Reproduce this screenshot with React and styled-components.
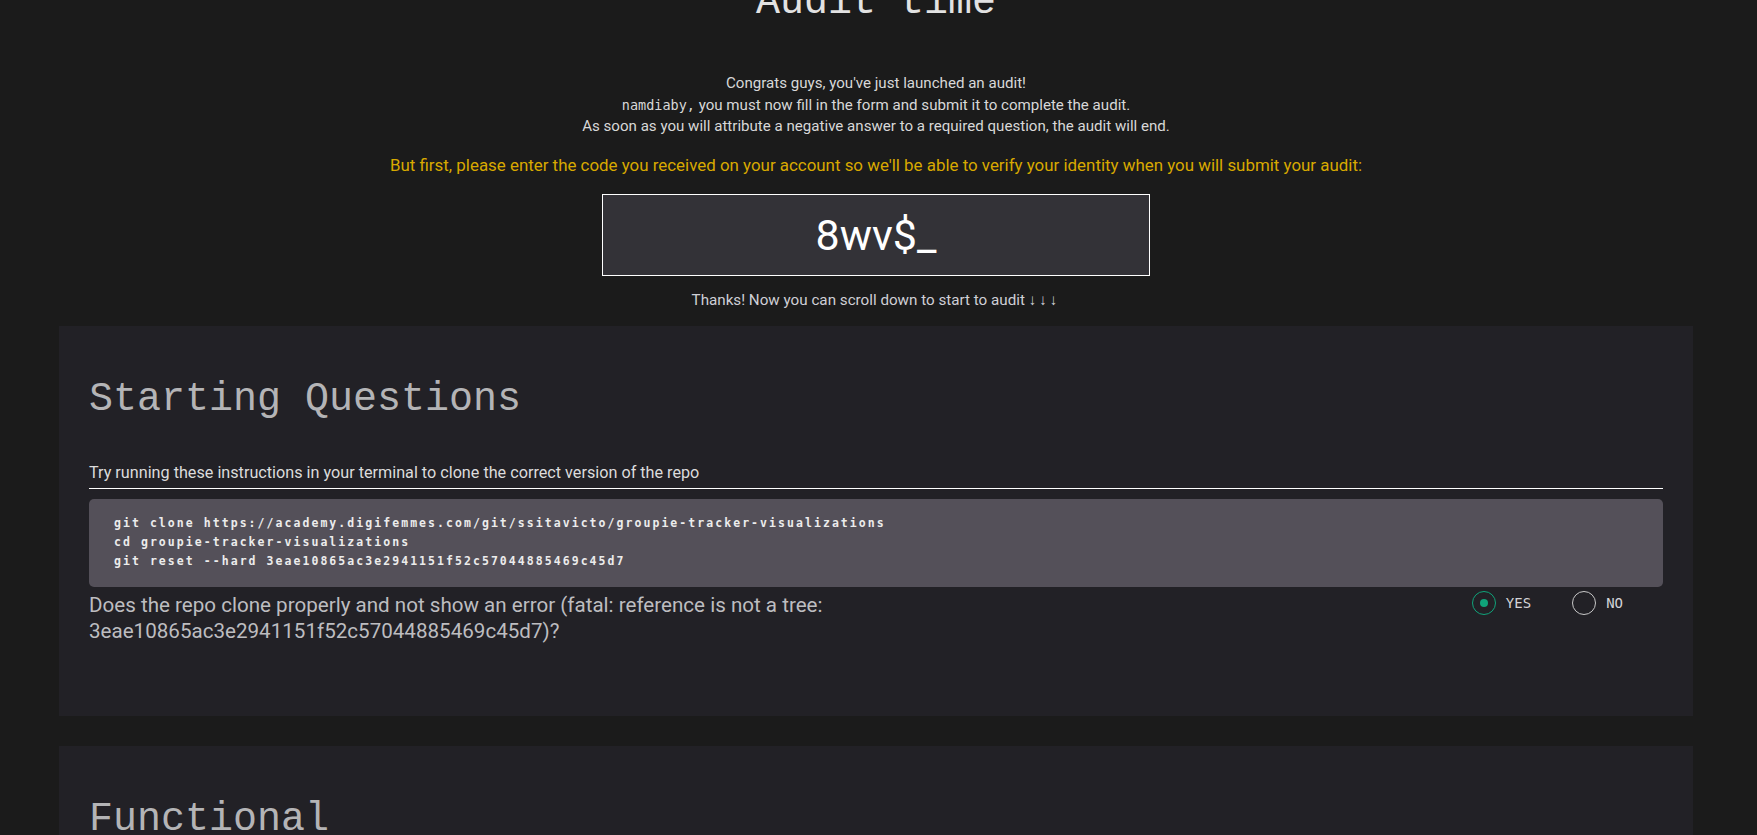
import React from "react";
import styled, { createGlobalStyle } from "styled-components";

const GlobalStyle = createGlobalStyle`
  html, body { margin: 0; padding: 0; }
  body {
    background: #1b1b1b;
    font-family: Roboto, "Noto Sans", sans-serif;
    color: #d6d6d6;
    overflow: hidden;
  }
`;

const Page = styled.div`
  padding: 0 64px 0 59px;
  display: flex;
  flex-direction: column;
`;

const Header = styled.header`
  display: flex;
  flex-direction: column;
  align-items: center;
  text-align: center;
`;

const PageTitle = styled.h1`
  margin: -17px 0 0;
  font-family: "Liberation Mono", monospace;
  font-weight: 400;
  font-size: 40px;
  line-height: 40px;
  color: #e2e2e2;
`;

const Intro = styled.p`
  margin: 50px 0 0;
  font-size: 15.1px;
  line-height: 21.5px;
  color: #d8d8d8;
`;

const Mono = styled.span`
  font-family: "DejaVu Sans Mono", monospace;
  font-size: 13.5px;
`;

const Notice = styled.p`
  margin: 16px 0 0;
  font-size: 16.9px;
  line-height: 22px;
  color: #d8a900;
`;

const CodeBox = styled.div`
  margin-top: 18px;
  width: 546px;
  height: 80px;
  border: 1px solid #ffffff;
  background: #333237;
  display: flex;
  align-items: center;
  justify-content: center;
  font-size: 43px;
  color: #ffffff;
  font-family: Roboto, "Noto Sans", sans-serif;
`;

const Thanks = styled.p`
  margin: 13px 0 0;
  font-size: 15.2px;
  line-height: 22px;
  color: #cfcfd6;
`;

const Arrows = styled.span`
  letter-spacing: 3px;
`;

const Card = styled.section`
  margin-top: ${(p) => p.$gap}px;
  background: #222126;
  padding: 49px 30px 72px;
`;

const SectionTitle = styled.h2`
  margin: 0;
  font-family: "Liberation Mono", monospace;
  font-weight: 400;
  font-size: 40px;
  line-height: 50px;
  color: #b4b4b6;
`;

const Instruction = styled.div`
  margin-top: 38px;
  padding-bottom: 5px;
  border-bottom: 1px solid #ffffff;
  font-size: 16.2px;
  line-height: 20px;
  color: #dcdcdc;
`;

const CodeBlock = styled.pre`
  margin: 10px 0 0;
  background: #545059;
  border-radius: 5px;
  padding: 15px 25px 16px;
  font-family: "DejaVu Sans Mono", monospace;
  font-weight: 700;
  font-size: 11.5px;
  letter-spacing: 2.05px;
  line-height: 19px;
  color: #ececec;
`;

const QuestionRow = styled.div`
  display: flex;
  align-items: flex-start;
  justify-content: space-between;
`;

const Question = styled.p`
  margin: 5px 0 0;
  width: 840px;
  font-size: 20.6px;
  line-height: 26px;
  color: #bdbdc0;
`;

const Radios = styled.div`
  display: flex;
  gap: 41px;
  margin: 4px 40px 0 0;
`;

const RadioLabel = styled.label`
  display: flex;
  align-items: center;
  gap: 10px;
  font-family: "DejaVu Sans Mono", monospace;
  font-size: 14px;
  color: #d4d4d8;
`;

const Circle = styled.span`
  width: 22px;
  height: 22px;
  border-radius: 50%;
  border: 1px solid ${(p) => (p.$checked ? "#10a37a" : "#c8c8c8")};
  display: flex;
  align-items: center;
  justify-content: center;
  &::after {
    content: "";
    width: 8px;
    height: 8px;
    border-radius: 50%;
    background: ${(p) => (p.$checked ? "#10a37a" : "transparent")};
  }
`;

const Radio = ({ label, checked }) => (
  <RadioLabel>
    <Circle $checked={checked} />
    {label}
  </RadioLabel>
);

export default function App() {
  return (
    <>
      <GlobalStyle />
      <Page>
        <Header>
          <PageTitle>Audit time</PageTitle>
          <Intro>
            Congrats guys, you've just launched an audit!
            <br />
            <Mono>namdiaby,</Mono> you must now fill in the form and submit it to complete the audit.
            <br />
            As soon as you will attribute a negative answer to a required question, the audit will end.
          </Intro>
          <Notice>
            But first, please enter the code you received on your account so we'll be able to verify your identity when you will submit your audit:
          </Notice>
          <CodeBox>8wv$_</CodeBox>
          <Thanks>
            Thanks! Now you can scroll down to start to audit <Arrows>↓↓↓</Arrows>
          </Thanks>
        </Header>
        <Card $gap={15}>
          <SectionTitle>Starting Questions</SectionTitle>
          <Instruction>
            Try running these instructions in your terminal to clone the correct version of the repo
          </Instruction>
          <CodeBlock>
            {`git clone https://academy.digifemmes.com/git/ssitavicto/groupie-tracker-visualizations
cd groupie-tracker-visualizations
git reset --hard 3eae10865ac3e2941151f52c57044885469c45d7`}
          </CodeBlock>
          <QuestionRow>
            <Question>
              Does the repo clone properly and not show an error (fatal: reference is not a tree: 3eae10865ac3e2941151f52c57044885469c45d7)?
            </Question>
            <Radios>
              <Radio label="YES" checked />
              <Radio label="NO" />
            </Radios>
          </QuestionRow>
        </Card>
        <Card $gap={30}>
          <SectionTitle>Functional</SectionTitle>
        </Card>
      </Page>
    </>
  );
}
